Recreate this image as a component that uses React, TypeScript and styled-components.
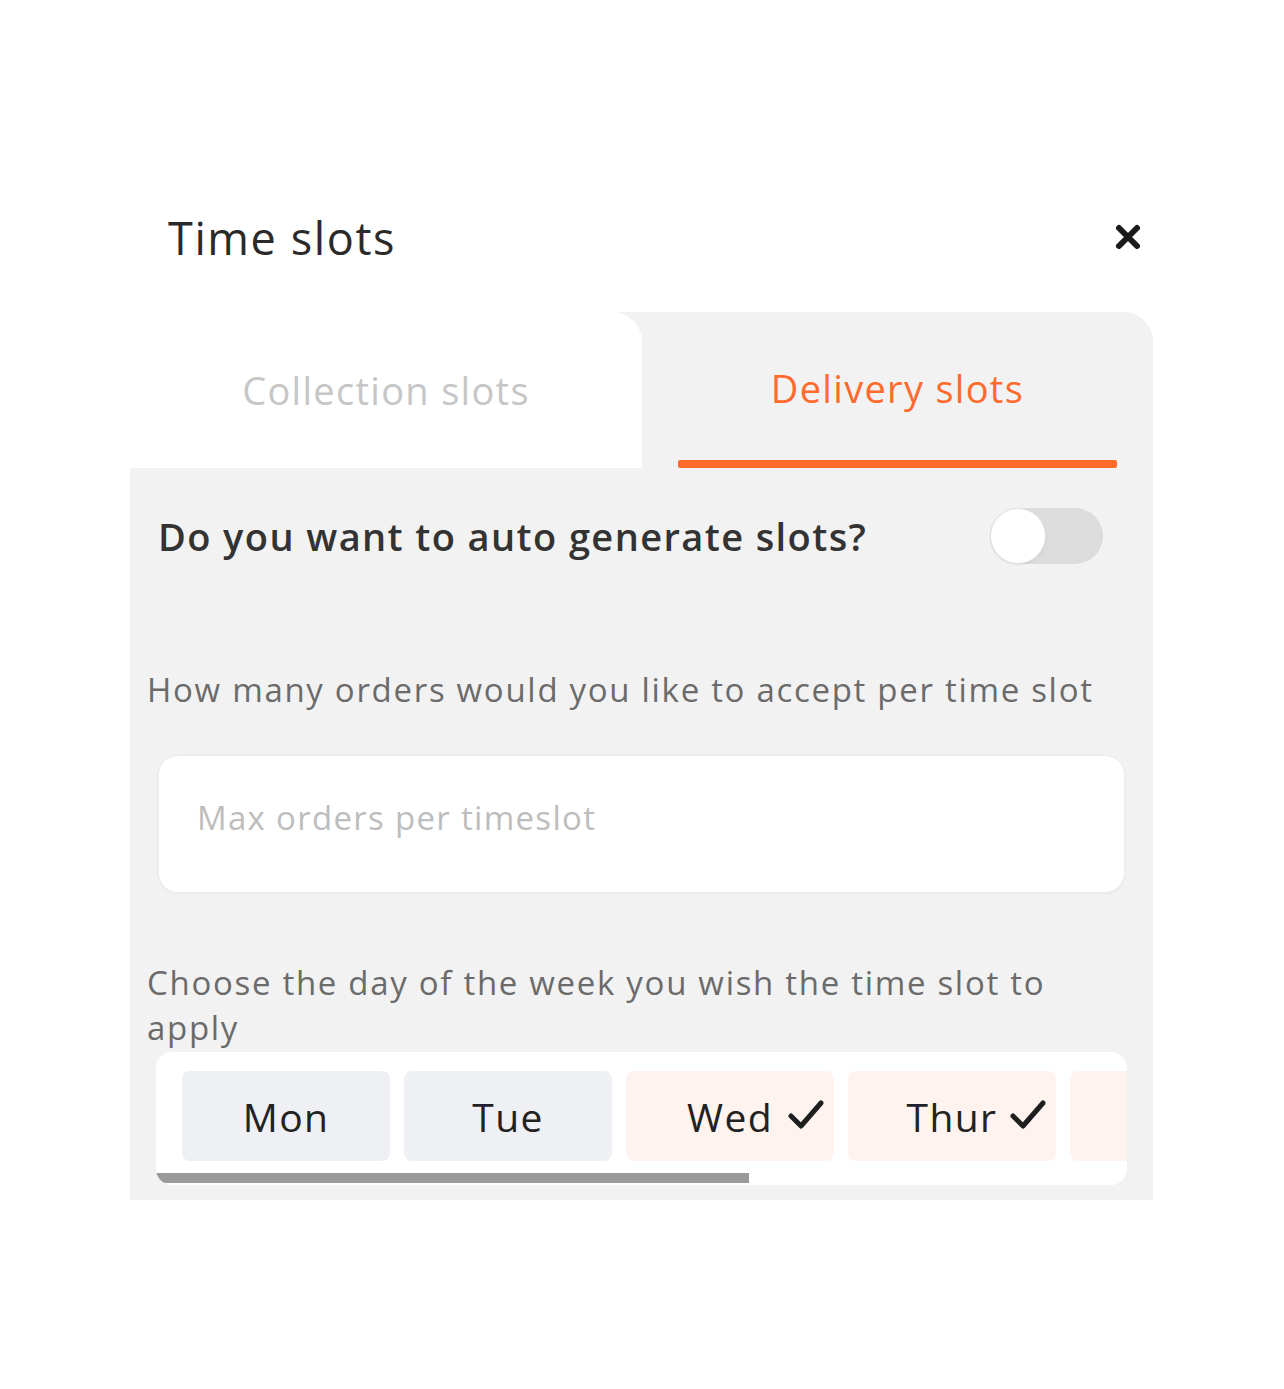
import styled, { createGlobalStyle } from 'styled-components';

const GlobalStyle = createGlobalStyle`
  html, body {
    margin: 0;
    padding: 0;
    background: #ffffff;
    font-family: "Open Sans", Lato, sans-serif;
  }
`

const Page = styled.div`
  box-sizing: border-box;
  width: 1284px;
  height: 1389px;
  padding-top: 199px;
  background: #ffffff;
  overflow: hidden;
`

const Modal = styled.div`
  margin-left: 130px;
  width: 1023px;
`

const Header = styled.div`
  display: flex;
  align-items: center;
  justify-content: space-between;
  height: 76px;
  padding: 0 10px 0 38px;
`

const Title = styled.h1`
  margin: 0;
  font-size: 45px;
  font-weight: 400;
  color: #2a2a2a;
  letter-spacing: 1.6px;
`

const CloseButton = styled.button`
  display: flex;
  align-items: center;
  justify-content: center;
  width: 30px;
  height: 30px;
  padding: 0;
  border: none;
  background: none;
  cursor: pointer;
`

const Panel = styled.div`
  margin-top: 37px;
  background: #f2f2f2;
  border-radius: 30px 30px 0 0;
  overflow: hidden;
  padding-bottom: 15px;
`

const Tabs = styled.div`
  display: grid;
  grid-template-columns: 512px 1fr;
  height: 156px;
`

const Tab = styled.div<{ $active?: boolean }>`
  position: relative;
  display: flex;
  align-items: center;
  justify-content: center;
  padding-bottom: ${p => p.$active ? '4px' : '0'};
  background: ${p => p.$active ? '#f2f2f2' : '#ffffff'};
  border-radius: ${p => p.$active ? '0' : '24px 30px 0 0'};
  color: ${p => p.$active ? '#ff6b2c' : '#c6c6c6'};
  font-size: 38px;
  font-weight: 400;
  letter-spacing: 1.3px;
`

const Underline = styled.div`
  position: absolute;
  left: 36px;
  right: 36px;
  bottom: 0;
  height: 8px;
  border-radius: 2px;
  background: #ff6b2c;
`

const Body = styled.div`
  display: flex;
  flex-direction: column;
`

const ToggleRow = styled.div`
  display: flex;
  align-items: center;
  justify-content: space-between;
  height: 60px;
  margin-top: 38px;
  padding: 0 50px 0 28px;
`

const Question = styled.span`
  font-size: 38px;
  font-weight: 600;
  color: #333333;
  letter-spacing: 1.4px;
`

const Switch = styled.div`
  position: relative;
  width: 113px;
  height: 56px;
  border-radius: 28px;
  background: #dcdcdc;
`

const Knob = styled.div`
  position: absolute;
  left: 0;
  top: 0;
  width: 56px;
  height: 56px;
  box-sizing: border-box;
  border-radius: 50%;
  background: #ffffff;
  border: 1px solid #e2e2e2;
  box-shadow: 0 1px 2px rgba(0, 0, 0, 0.08);
`

const Label = styled.p<{ $top: number }>`
  margin: ${p => p.$top}px 28px 0 17px;
  font-size: 33px;
  line-height: 45px;
  color: #6b6b6b;
  letter-spacing: 1.7px;
`

const InputBox = styled.input`
  box-sizing: border-box;
  margin: 43px 28px 0 28px;
  height: 138px;
  padding: 0 38px 14px 38px;
  border: 1px solid #ececec;
  border-radius: 20px;
  background: #ffffff;
  box-shadow: 0 1px 3px rgba(0, 0, 0, 0.04);
  font-family: inherit;
  font-size: 33px;
  letter-spacing: 1.3px;
  color: #333333;
  outline: none;

  &::placeholder {
    color: #bdbdbd;
  }
`

const DaysCard = styled.div`
  margin: 2px 26px 0 26px;
  height: 133px;
  border-radius: 16px;
  background: #ffffff;
  overflow: hidden;
  display: flex;
  flex-direction: column;
`

const DaysRow = styled.div`
  display: flex;
  gap: 14px;
  padding: 19px 0 0 26px;
  overflow: hidden;
`

const Day = styled.div<{ $selected?: boolean }>`
  position: relative;
  flex: 0 0 208px;
  height: 90px;
  display: flex;
  align-items: center;
  justify-content: center;
  border-radius: 8px;
  background: ${p => p.$selected ? '#fff3ef' : '#eef0f4'};
  font-size: 39px;
  color: #222222;
  letter-spacing: 1.4px;
`

const Check = styled.span`
  position: absolute;
  right: 10px;
  top: 28px;
  display: flex;
`

const ScrollThumb = styled.div`
  margin-top: 12px;
  width: 593px;
  height: 10px;
  background: #9a9a9a;
`

const days = [
  { name: 'Mon', selected: false },
  { name: 'Tue', selected: false },
  { name: 'Wed', selected: true },
  { name: 'Thur', selected: true },
  { name: '', selected: true },
]

const CheckIcon = () => (
  <svg width="36" height="32" viewBox="0 0 36 32">
    <path d="M3 17 L13 27 L33 4" fill="none" stroke="#1e1e1e" strokeWidth="5" strokeLinecap="round" strokeLinejoin="round" />
  </svg>
)

const CloseIcon = () => (
  <svg width="28" height="28" viewBox="0 0 28 28">
    <path d="M5 5 L23 23 M23 5 L5 23" stroke="#1a1a1a" strokeWidth="6" strokeLinecap="round" />
  </svg>
)

export default function App() {
  return (
    <Page>
      <GlobalStyle />
      <Modal>
        <Header>
          <Title>Time slots</Title>
          <CloseButton aria-label="Close">
            <CloseIcon />
          </CloseButton>
        </Header>

        <Panel>
          <Tabs>
            <Tab>Collection slots</Tab>
            <Tab $active>
              Delivery slots
              <Underline />
            </Tab>
          </Tabs>

          <Body>
            <ToggleRow>
              <Question>Do you want to auto generate slots?</Question>
              <Switch>
                <Knob />
              </Switch>
            </ToggleRow>

            <Label $top={101}>How many orders would you like to accept per time slot</Label>
            <InputBox placeholder="Max orders per timeslot" />

            <Label $top={67}>Choose the day of the week you wish the time slot to apply</Label>
            <DaysCard>
              <DaysRow>
                {days.map((d, i) => (
                  <Day key={i} $selected={d.selected}>
                    {d.name}
                    {d.selected && d.name && <Check><CheckIcon /></Check>}
                  </Day>
                ))}
              </DaysRow>
              <ScrollThumb />
            </DaysCard>
          </Body>
        </Panel>
      </Modal>
    </Page>
  );
}
